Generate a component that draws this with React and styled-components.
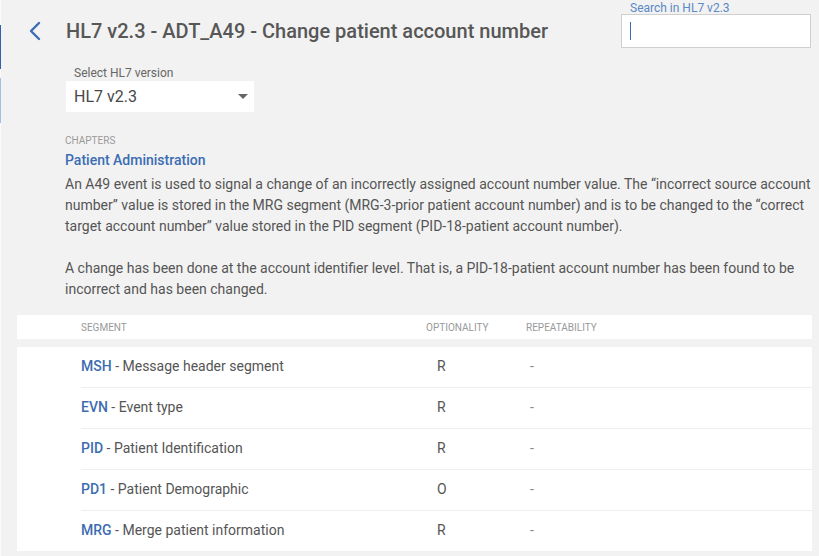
import React from "react";
import styled, { createGlobalStyle } from "styled-components";

const Global = createGlobalStyle`
  html, body { margin: 0; padding: 0; background: #f2f2f2; }
  body { font-family: Roboto, "Noto Sans", Arial, sans-serif; color: #555; }
  * { box-sizing: border-box; }
`;

const Page = styled.div`
  display: flex;
  min-height: 556px;
  background: #f2f2f2;
`;

const SideStrip = styled.div`
  width: 1px;
  flex: none;
  background: #fafafa;
  display: flex;
  flex-direction: column;
`;

const SideMark = styled.div`
  height: ${(p) => p.$h}px;
  margin-top: ${(p) => p.$top}px;
  background: ${(p) => p.$color};
`;

const Main = styled.div`
  flex: 1;
  min-width: 0;
  padding: 0 7px 0 16px;
  display: flex;
  flex-direction: column;
`;

const Header = styled.div`
  display: flex;
  justify-content: space-between;
  align-items: flex-start;
`;

const TitleRow = styled.div`
  display: flex;
  align-items: center;
  margin-top: 19px;
  padding-left: 8px;
`;

const BackButton = styled.button`
  border: 0;
  background: transparent;
  padding: 0;
  width: 20px;
  height: 24px;
  margin-right: 21px;
  display: flex;
  align-items: center;
  justify-content: center;
  cursor: pointer;
`;

const Title = styled.h1`
  margin: 0;
  font-size: 20px;
  line-height: 24px;
  font-weight: 500;
  color: #575757;
`;

const SearchBlock = styled.div`
  width: 190px;
  margin-right: 1px;
  margin-top: 1px;
  display: flex;
  flex-direction: column;
`;

const SearchLabel = styled.label`
  font-size: 12px;
  line-height: 14px;
  color: #5b88c6;
  padding-left: 9px;
  margin-bottom: -1px;
`;

const SearchInput = styled.div`
  height: 34px;
  background: #fff;
  border: 1px solid #cfcfcf;
  display: flex;
  align-items: center;
  padding-left: 8px;
`;

const Caret = styled.span`
  width: 1px;
  height: 18px;
  background: #3d6aa8;
`;

const Content = styled.div`
  padding-left: 48px;
  margin-right: -7px;
  display: flex;
  flex-direction: column;
`;

const SelectGroup = styled.div`
  margin-top: 18px;
  display: flex;
  flex-direction: column;
  width: 188px;
  margin-left: 1px;
`;

const SelectLabel = styled.div`
  font-size: 12px;
  line-height: 14px;
  color: #666;
  padding-left: 8px;
  margin-bottom: 1px;
`;

const SelectBox = styled.div`
  height: 31px;
  background: #fff;
  display: flex;
  align-items: center;
  justify-content: space-between;
  padding: 0 5px 0 8px;
  font-size: 16px;
  color: #474747;
`;

const Arrow = styled.span`
  width: 0;
  height: 0;
  border-left: 5px solid transparent;
  border-right: 5px solid transparent;
  border-top: 5px solid #666;
  margin-right: 1px;
`;

const SectionLabel = styled.div`
  margin-top: 23px;
  font-size: 10px;
  line-height: 12px;
  color: #9a9a9a;
  text-transform: uppercase;
`;

const ChapterLink = styled.div`
  margin-top: 3px;
  font-size: 14px;
  line-height: 20px;
  font-weight: 500;
  color: #3b6db3;
`;

const Description = styled.p`
  margin: 4px 0 0;
  font-size: 14px;
  line-height: 21px;
  color: #555;
`;

const Table = styled.div`
  margin-top: 15px;
  display: flex;
  flex-direction: column;
  gap: 8px;
`;

const HeaderRow = styled.div`
  background: #fff;
  height: 24px;
  display: grid;
  grid-template-columns: 345px 100px 1fr;
  align-items: center;
  padding-left: 64px;
`;

const HeadCell = styled.div`
  font-size: 10px;
  color: #999;
  text-transform: uppercase;
`;

const Body = styled.div`
  background: #fff;
  padding-left: 64px;
`;

const Row = styled.div`
  box-sizing: content-box;
  height: 38px;
  padding-bottom: 2px;
  display: grid;
  grid-template-columns: 345px 100px 1fr;
  align-items: center;
  border-top: ${(p) => (p.$first ? "0" : "1px solid #eeeeee")};
  font-size: 14px;
  color: #555;
`;

const SegCode = styled.span`
  font-weight: 500;
  color: #3d6db0;
`;

const OptCell = styled.div`
  padding-left: 11px;
`;

const RepCell = styled.div`
  padding-left: 4px;
  color: #888;
`;

const segments = [
  { code: "MSH", name: "Message header segment", opt: "R" },
  { code: "EVN", name: "Event type", opt: "R" },
  { code: "PID", name: "Patient Identification", opt: "R" },
  { code: "PD1", name: "Patient Demographic", opt: "O" },
  { code: "MRG", name: "Merge patient information", opt: "R" },
];

export default function App() {
  return (
    <>
      <Global />
      <Page>
        <SideStrip>
          <SideMark $top={25} $h={44} $color="#2f62ad" />
          <SideMark $top={9} $h={45} $color="#a3bfe2" />
        </SideStrip>
        <Main>
          <Header>
            <TitleRow>
              <BackButton aria-label="Back">
                <svg width="14" height="20" viewBox="0 0 14 20">
                  <polyline
                    points="11,2 3,10 11,18"
                    fill="none"
                    stroke="#3b6db3"
                    strokeWidth="2.4"
                    strokeLinecap="round"
                    strokeLinejoin="round"
                  />
                </svg>
              </BackButton>
              <Title>HL7 v2.3 - ADT_A49 - Change patient account number</Title>
            </TitleRow>
            <SearchBlock>
              <SearchLabel>Search in HL7 v2.3</SearchLabel>
              <SearchInput>
                <Caret />
              </SearchInput>
            </SearchBlock>
          </Header>
          <Content>
            <SelectGroup>
              <SelectLabel>Select HL7 version</SelectLabel>
              <SelectBox>
                <span>HL7 v2.3</span>
                <Arrow />
              </SelectBox>
            </SelectGroup>
            <SectionLabel>Chapters</SectionLabel>
            <ChapterLink>Patient Administration</ChapterLink>
            <Description>
              An A49 event is used to signal a change of an incorrectly assigned account number value. The “incorrect source account number” value is stored in the MRG segment (MRG-3-prior patient account number) and is to be changed to the “correct target account number” value stored in the PID segment (PID-18-patient account number).
              <br />
              <br />
              A change has been done at the account identifier level. That is, a PID-18-patient account number has been found to be incorrect and has been changed.
            </Description>
          </Content>
          <Table>
            <HeaderRow>
              <HeadCell>Segment</HeadCell>
              <HeadCell>Optionality</HeadCell>
              <HeadCell>Repeatability</HeadCell>
            </HeaderRow>
            <Body>
              {segments.map((s, i) => (
                <Row key={s.code} $first={i === 0}>
                  <div>
                    <SegCode>{s.code}</SegCode> - {s.name}
                  </div>
                  <OptCell>{s.opt}</OptCell>
                  <RepCell>-</RepCell>
                </Row>
              ))}
            </Body>
          </Table>
        </Main>
      </Page>
    </>
  );
}
